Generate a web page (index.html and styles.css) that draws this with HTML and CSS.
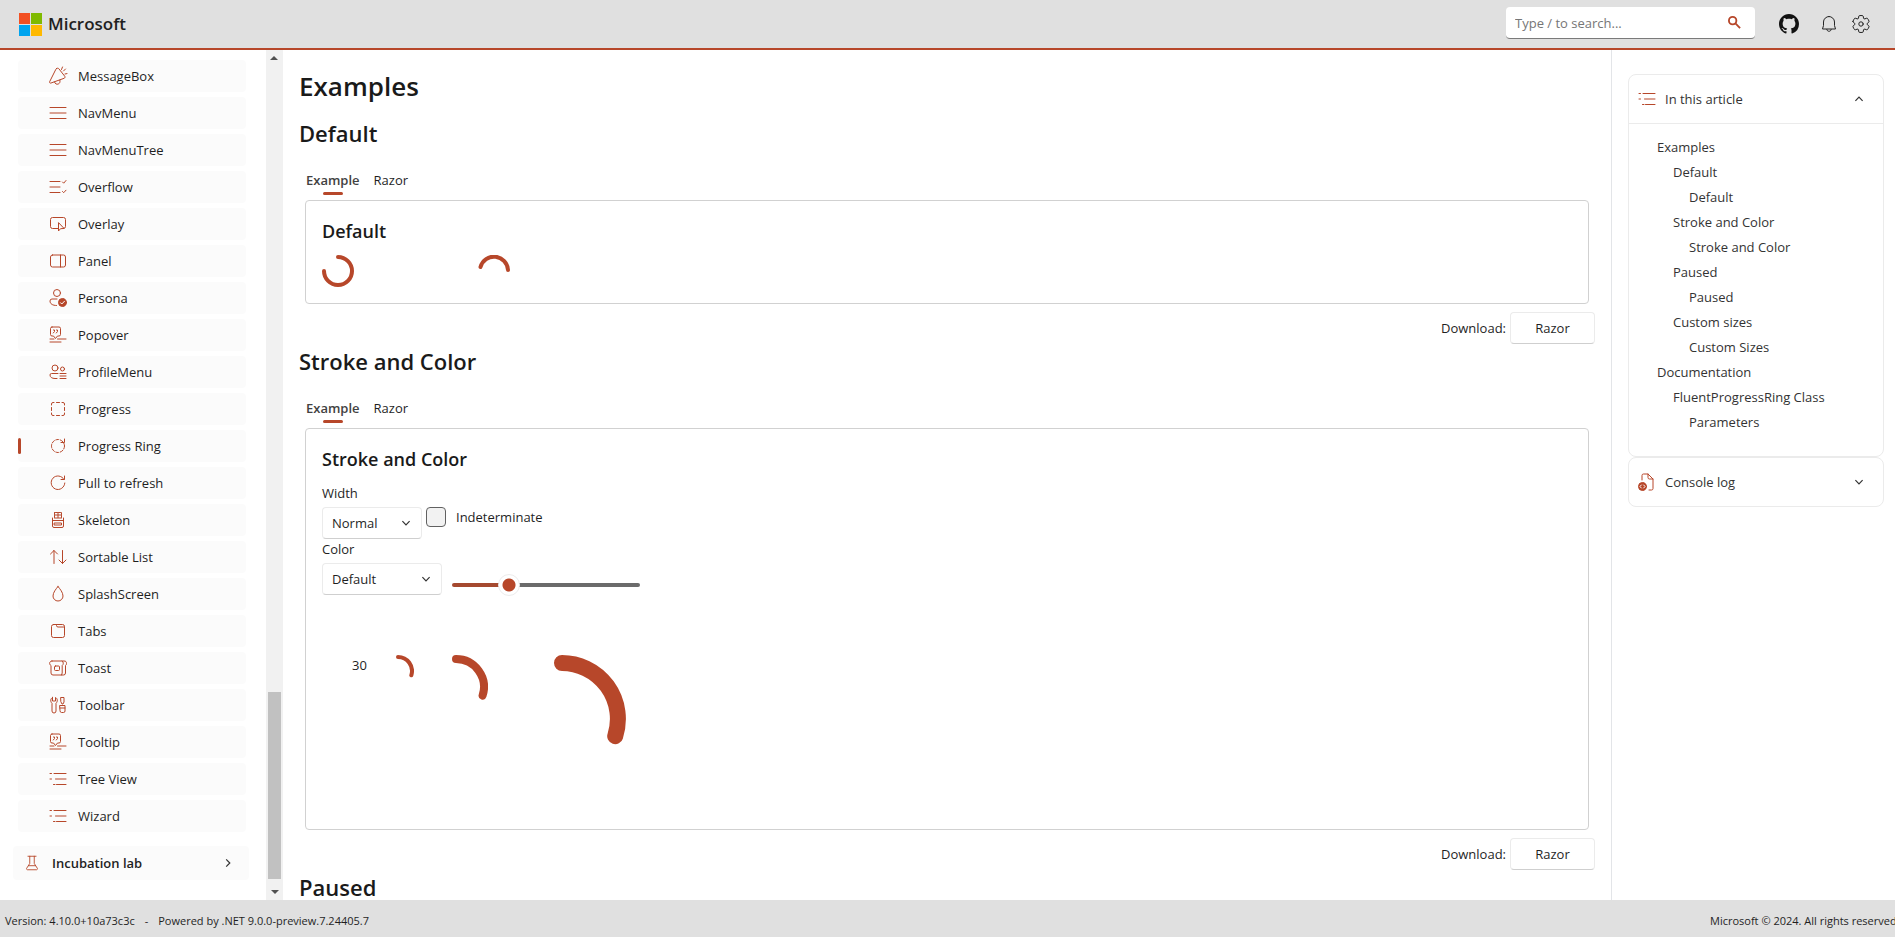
FILE: index.html
```html
<!DOCTYPE html>
<html lang="en">
<head>
<meta charset="utf-8">
<title>Progress Ring</title>
<link rel="stylesheet" href="styles.css">
</head>
<body>
<svg class="sprite" aria-hidden="true">
  <symbol id="i-message" viewBox="0 0 20 20"><path d="M8.500 2.500c.8-.6 1.800-.4 2.400.3l5.800 7.400c.6.8.3 1.800-.6 2.100L3 17c-1 .4-1.700-.4-1.400-1.200L7.600 3.800c.2-.5.5-1 .9-1.300ZM6.500 16c.5 2 2.300 2.600 3.800 2 1.500-.7 2-2 1.600-3.800M13.500 3.500 14.500 1M15.500 5l2-2M17 8l2-.4"/></symbol>
  <symbol id="i-menu" viewBox="0 0 20 20"><path d="M2 4.500h16M2 10h16M2 15.500h16"/></symbol>
  <symbol id="i-overflow" viewBox="0 0 20 20"><path d="M2 4.500h10M2 10h10M2 15.500h10M14.500 5l1.200 1.200L18 3.500M14.500 14.500l1.200 1.200 2.300-2.500"/></symbol>
  <symbol id="i-overlay" viewBox="0 0 20 20"><path d="M10 14.500H4.500a2 2 0 0 1-2-2v-7a2 2 0 0 1 2-2h11a2 2 0 0 1 2 2v7a2 2 0 0 1-2 2M10.500 9v8l2-2.300 3.200-.2Z"/></symbol>
  <symbol id="i-panel" viewBox="0 0 20 20"><rect x="2.500" y="4" width="15" height="12" rx="2"/><path d="M12.500 4v12"/></symbol>
  <symbol id="i-persona" viewBox="0 0 20 20"><circle cx="9" cy="5" r="3.500"/><path d="M9 11H4a2 2 0 0 0-2 2c0 2.800 2.500 4.500 6.500 4.500"/><circle cx="14.500" cy="14.500" r="4" fill="currentColor"/><path class="knock" d="m12.500 14.700 1.300 1.300 2.700-2.800"/></symbol>
  <symbol id="i-popover" viewBox="0 0 20 20"><path d="M4 2h7a1.500 1.500 0 0 1 1.500 1.500v6A1.500 1.500 0 0 1 11 11H9.500l-2 2.500-2-2.500H4a1.500 1.500 0 0 1-1.500-1.500v-6A1.500 1.500 0 0 1 4 2ZM5.500 5h1v1.500L5.300 8M8.500 5h1v1.500L8.300 8M2 14h4M9.500 14H18M2 17h11"/></symbol>
  <symbol id="i-profile" viewBox="0 0 20 20"><circle cx="7" cy="6" r="3"/><circle cx="14.500" cy="7" r="2"/><path d="M10 11.500H3.500a1.500 1.500 0 0 0-1.500 1.500c0 2.200 2 3.500 5 3.500h2M12 11.500h6M12 14h6M12 16.500h6"/></symbol>
  <symbol id="i-progress" viewBox="0 0 20 20"><path d="M3.500 6V5A1.500 1.500 0 0 1 5 3.500h1M8.500 3.500h3M14 3.500h1A1.500 1.500 0 0 1 16.500 5v1M16.500 8.500v3M16.500 14v1a1.500 1.500 0 0 1-1.500 1.500h-1M11.500 16.500h-3M6 16.500H5A1.500 1.500 0 0 1 3.500 15v-1M3.500 11.500v-3"/></symbol>
  <symbol id="i-ring" viewBox="0 0 20 20"><circle cx="10" cy="10" r="6.500" stroke-dasharray="3 1.600"/><path d="M16.500 3v3.500H13"/></symbol>
  <symbol id="i-refresh" viewBox="0 0 20 20"><path d="M16 6.500A6.800 6.800 0 1 0 16.800 10M16.500 3v3.500H13"/></symbol>
  <symbol id="i-skeleton" viewBox="0 0 20 20"><path d="M6.500 7.500V2.500h7v5" stroke-dasharray="2 1"/><path d="M6.500 5h7M6.500 8h7M10 2.500v5M4.500 8v8a1.500 1.500 0 0 0 1.500 1.500h8a1.500 1.500 0 0 0 1.500-1.500V8M4.500 10.500h11M6.500 13h7v2h-7Z"/></symbol>
  <symbol id="i-sort" viewBox="0 0 20 20"><path d="M6 16.500v-13M2.500 7 6 3.500 9.500 7M14.500 3.500v13M11 13l3.500 3.500L18 13"/></symbol>
  <symbol id="i-drop" viewBox="0 0 20 20"><path d="M10 2.500c2 2.500 5 6 5 9.500a5 5 0 0 1-10 0c0-3.500 3-7 5-9.500Z"/></symbol>
  <symbol id="i-tabs" viewBox="0 0 20 20"><rect x="3.500" y="3.500" width="13" height="13" rx="2"/><path d="M8.500 3.500v1a1.500 1.500 0 0 0 1.500 1.500h6.500"/></symbol>
  <symbol id="i-toast" viewBox="0 0 20 20"><path d="M4 3h12c2 0 2.500 1 2.500 2.500 0 1-.4 1.700-1 2V15a2 2 0 0 1-2 2H5a2 2 0 0 1-2-2V7.500C1 6.500 1 3 4 3ZM13.500 17l.7-2V7.500c1.500-1 1.500-3.500 0-4.500"/><rect x="6.500" y="8" width="5" height="4.500" rx="1"/></symbol>
  <symbol id="i-tools" viewBox="0 0 20 20"><path d="M4.500 2.500v3.500h3V2.500c2 .8 2.500 4 .5 5.800v7.700a2 2 0 0 1-4 0V8.300c-2-1.800-1.500-5 .5-5.800ZM13 2.500h3V7l-1 2h-1l-1-2ZM12 10.500h5V16a1.500 1.500 0 0 1-1.500 1.500h-2A1.500 1.500 0 0 1 12 16ZM12 13h5"/></symbol>
  <symbol id="i-list" viewBox="0 0 20 20"><path d="M6 4.500h12M7.500 10H18M8.500 15.500H18M2 4.500h1.500M2 10h1.500M5.500 15.500H7"/></symbol>
  <symbol id="i-lab" viewBox="0 0 20 20"><path d="M5.500 2.500h9M7.500 2.500v8L4 16c-.3.800.2 1.500 1 1.500h10c.8 0 1.300-.7 1-1.500l-3.500-5.500v-8M6 13h8"/></symbol>
  <symbol id="i-down" viewBox="0 0 20 20"><path d="m4 7 6 6 6-6"/></symbol>
  <symbol id="i-bell" viewBox="0 0 20 20"><path d="M10 2.500a5.500 5.500 0 0 0-5.500 5.500v3.500L3.500 15h13l-1-3.500V8A5.500 5.500 0 0 0 10 2.500ZM7.800 15.500c.2 2.500 4.200 2.500 4.400 0"/></symbol>
  <symbol id="i-gear" viewBox="0 0 20 20"><path d="M1.910 7.380A8.500 8.500 0 0 1 3.700 4.300a.5.5 0 0 1 .54-.13l1.920.68a1 1 0 0 0 1.320-.76l.36-2a.5.5 0 0 1 .4-.4 8.530 8.530 0 0 1 3.550 0c.2.040.35.2.38.4l.37 2a1 1 0 0 0 1.320.76l1.920-.68a.5.5 0 0 1 .54.13 8.500 8.500 0 0 1 1.780 3.080c.06.2 0 .4-.15.54l-1.560 1.320a1 1 0 0 0 0 1.520l1.560 1.320a.5.5 0 0 1 .15.54 8.500 8.500 0 0 1-1.780 3.080.5.5 0 0 1-.54.13l-1.920-.68a1 1 0 0 0-1.320.76l-.37 2a.5.5 0 0 1-.38.4 8.530 8.530 0 0 1-3.560 0 .5.5 0 0 1-.39-.4l-.36-2a1 1 0 0 0-1.320-.76l-1.920.68a.5.5 0 0 1-.54-.13 8.500 8.500 0 0 1-1.780-3.080.5.5 0 0 1 .15-.54l1.560-1.320a1 1 0 0 0 0-1.520L2.060 7.920a.5.5 0 0 1-.15-.54Z"/><circle cx="10" cy="10" r="2.200"/></symbol>
  <symbol id="i-console" viewBox="0 0 20 20"><path d="M5 8V3.500A1.500 1.500 0 0 1 6.500 2H11l5 5v9.500a1.500 1.500 0 0 1-1.500 1.500H12M11 2v3.500A1.500 1.500 0 0 0 12.500 7H16"/><circle cx="5.500" cy="14.500" r="4" fill="currentColor"/><path class="knock" d="m4.300 13-1.300 1.500 1.300 1.500M6.700 13 8 14.500 6.700 16"/></symbol>
</svg>

<div class="page">
  <header class="topbar">
    <a class="brand" href="#">
      <svg width="23" height="23" viewBox="0 0 23 23" aria-hidden="true"><path fill="#f25022" d="M0 0h11v11H0z"/><path fill="#7fba00" d="M12 0h11v11H12z"/><path fill="#00a4ef" d="M0 12h11v11H0z"/><path fill="#ffb900" d="M12 12h11v11H12z"/></svg>
      <span>Microsoft</span>
    </a>
    <div class="search">
      <input type="text" aria-label="Search" placeholder="Type / to search...">
      <svg class="glass" viewBox="0 0 14 14" aria-hidden="true"><circle cx="5" cy="5" r="4"/><path d="m8 8 5 5"/></svg>
    </div>
    <a class="tool github" href="#" aria-label="GitHub"><svg viewBox="0 0 16 16" aria-hidden="true"><path d="M8 0C3.580 0 0 3.580 0 8c0 3.540 2.290 6.530 5.470 7.590.4.070.55-.17.55-.38 0-.19-.01-.82-.01-1.490-2.010.37-2.530-.49-2.690-.94-.09-.23-.48-.94-.82-1.130-.28-.15-.68-.52-.01-.53.63-.01 1.080.58 1.230.82.72 1.210 1.870.87 2.330.66.07-.52.28-.87.51-1.070-1.780-.2-3.640-.89-3.640-3.950 0-.87.31-1.590.82-2.150-.08-.2-.36-1.020.08-2.120 0 0 .67-.21 2.200.82.64-.18 1.320-.27 2-.27s1.360.09 2 .27c1.530-1.040 2.200-.82 2.200-.82.44 1.100.16 1.920.08 2.120.51.56.82 1.270.82 2.150 0 3.070-1.870 3.750-3.650 3.950.29.25.54.73.54 1.480 0 1.070-.01 1.930-.01 2.200 0 .21.15.46.55.38A8.010 8.010 0 0 0 16 8c0-4.420-3.580-8-8-8Z"/></svg></a>
    <button class="tool" aria-label="Notifications"><svg class="icon dark"><use href="#i-bell"/></svg></button>
    <button class="tool" aria-label="Settings"><svg class="icon dark"><use href="#i-gear"/></svg></button>
  </header>

  <div class="body">
    <nav class="nav">
      <div class="nav-list">
        <a class="nav-item" href="#"><svg class="icon"><use href="#i-message"/></svg>MessageBox</a>
        <a class="nav-item" href="#"><svg class="icon"><use href="#i-menu"/></svg>NavMenu</a>
        <a class="nav-item" href="#"><svg class="icon"><use href="#i-menu"/></svg>NavMenuTree</a>
        <a class="nav-item" href="#"><svg class="icon"><use href="#i-overflow"/></svg>Overflow</a>
        <a class="nav-item" href="#"><svg class="icon"><use href="#i-overlay"/></svg>Overlay</a>
        <a class="nav-item" href="#"><svg class="icon"><use href="#i-panel"/></svg>Panel</a>
        <a class="nav-item" href="#"><svg class="icon"><use href="#i-persona"/></svg>Persona</a>
        <a class="nav-item" href="#"><svg class="icon"><use href="#i-popover"/></svg>Popover</a>
        <a class="nav-item" href="#"><svg class="icon"><use href="#i-profile"/></svg>ProfileMenu</a>
        <a class="nav-item" href="#"><svg class="icon"><use href="#i-progress"/></svg>Progress</a>
        <a class="nav-item current" href="#"><svg class="icon"><use href="#i-ring"/></svg>Progress Ring</a>
        <a class="nav-item" href="#"><svg class="icon"><use href="#i-refresh"/></svg>Pull to refresh</a>
        <a class="nav-item" href="#"><svg class="icon"><use href="#i-skeleton"/></svg>Skeleton</a>
        <a class="nav-item" href="#"><svg class="icon"><use href="#i-sort"/></svg>Sortable List</a>
        <a class="nav-item" href="#"><svg class="icon"><use href="#i-drop"/></svg>SplashScreen</a>
        <a class="nav-item" href="#"><svg class="icon"><use href="#i-tabs"/></svg>Tabs</a>
        <a class="nav-item" href="#"><svg class="icon"><use href="#i-toast"/></svg>Toast</a>
        <a class="nav-item" href="#"><svg class="icon"><use href="#i-tools"/></svg>Toolbar</a>
        <a class="nav-item" href="#"><svg class="icon"><use href="#i-popover"/></svg>Tooltip</a>
        <a class="nav-item" href="#"><svg class="icon"><use href="#i-list"/></svg>Tree View</a>
        <a class="nav-item" href="#"><svg class="icon"><use href="#i-list"/></svg>Wizard</a>
        <button class="nav-group"><svg class="icon small"><use href="#i-lab"/></svg><span>Incubation lab</span><svg class="chevron right"><use href="#i-down"/></svg></button>
      </div>
      <div class="scrollbar" aria-hidden="true">
        <span class="arrow up"></span>
        <span class="track"><span class="thumb"></span></span>
        <span class="arrow"></span>
      </div>
    </nav>

    <main class="content">
      <h1>Examples</h1>

      <section>
        <h2>Default</h2>
        <div class="tabs" role="tablist"><button class="tab active" role="tab" aria-selected="true">Example</button><button class="tab" role="tab">Razor</button></div>
        <div class="panel">
          <h3>Default</h3>
          <div class="rings spaced">
            <svg class="ring s" viewBox="0 0 32 32"><path d="M16 2a14 14 0 1 1-14 14"/></svg>
            <svg class="ring s" viewBox="0 0 32 32"><path d="M2.500 12A14 14 0 0 1 30 15"/></svg>
          </div>
        </div>
        <div class="download"><span>Download:</span><button class="button">Razor</button></div>
      </section>

      <section>
        <h2>Stroke and Color</h2>
        <div class="tabs" role="tablist"><button class="tab active" role="tab" aria-selected="true">Example</button><button class="tab" role="tab">Razor</button></div>
        <div class="panel tall">
          <h3>Stroke and Color</h3>
          <div class="fields">
            <div class="row">
              <div class="field">
                <label for="width">Width</label>
                <div class="select narrow"><select id="width"><option>Normal</option></select><svg class="chevron"><use href="#i-down"/></svg></div>
              </div>
              <div class="check"><input type="checkbox" id="ind"><label for="ind">Indeterminate</label></div>
            </div>
            <div class="row">
              <div class="field">
                <label for="color">Color</label>
                <div class="select"><select id="color"><option>Default</option></select><svg class="chevron"><use href="#i-down"/></svg></div>
              </div>
              <input class="slider" type="range" min="0" max="100" value="28" aria-label="Progress">
            </div>
          </div>
          <div class="rings sized">
            <span class="value">30</span>
            <svg class="ring s" viewBox="0 0 32 32"><path d="M16 2a14 14 0 0 1 13.300 18.300"/></svg>
            <svg class="ring m" viewBox="0 0 32 32"><path d="M16 2a14 14 0 0 1 13.300 18.300"/></svg>
            <svg class="ring l" viewBox="0 0 32 32"><path d="M16 2a14 14 0 0 1 13.300 18.300"/></svg>
          </div>
        </div>
        <div class="download"><span>Download:</span><button class="button">Razor</button></div>
      </section>

      <section>
        <h2>Paused</h2>
      </section>
    </main>

    <aside class="side">
      <section class="card">
        <button class="card-head"><svg class="icon"><use href="#i-list"/></svg><span>In this article</span><svg class="chevron flip"><use href="#i-down"/></svg></button>
        <ul class="toc">
          <li><a href="#">Examples</a>
            <ul>
              <li><a href="#">Default</a><ul><li><a href="#">Default</a></li></ul></li>
              <li><a href="#">Stroke and Color</a><ul><li><a href="#">Stroke and Color</a></li></ul></li>
              <li><a href="#">Paused</a><ul><li><a href="#">Paused</a></li></ul></li>
              <li><a href="#">Custom sizes</a><ul><li><a href="#">Custom Sizes</a></li></ul></li>
            </ul>
          </li>
          <li><a href="#">Documentation</a>
            <ul>
              <li><a href="#">FluentProgressRing Class</a><ul><li><a href="#">Parameters</a></li></ul></li>
            </ul>
          </li>
        </ul>
      </section>
      <section class="card">
        <button class="card-head"><svg class="icon"><use href="#i-console"/></svg><span>Console log</span><svg class="chevron"><use href="#i-down"/></svg></button>
      </section>
    </aside>
  </div>

  <footer class="footer">
    <span class="version"><span>Version: 4.10.0+10a73c3c</span><span>-</span><span>Powered by .NET 9.0.0-preview.7.24405.7</span></span>
    <span class="copyright">Microsoft © 2024. All rights reserved.</span>
  </footer>
</div>
</body>
</html>
```

FILE: styles.css
```css
:root {
  --accent: #b7472a;
  --text: #1f1f1f;
  --bar: #e0e0e0;
  --line: #ebebeb;
}

* { box-sizing: border-box; }

body {
  margin: 0;
  color: var(--text);
  background: #fff;
  font: 13px/20px "Open Sans", "Noto Sans", sans-serif;
}

button, input, select { font: inherit; color: inherit; }
button { border: 0; background: none; padding: 0; }
a { color: inherit; text-decoration: none; }
h1, h2, h3 { margin: 0; font-weight: 600; color: #1a1a1a; }

.sprite { display: none; }

.page {
  height: 100vh;
  display: grid;
  grid-template-rows: auto minmax(0, 1fr) auto;
  overflow: hidden;
}

.icon {
  width: 20px;
  height: 20px;
  flex: none;
  color: var(--accent);
  fill: none;
  stroke: currentColor;
  stroke-width: 1;
  stroke-linecap: round;
  stroke-linejoin: round;
}
.icon.small { width: 18px; height: 18px; }
.icon.dark { color: #242424; }
.knock { stroke: #fff; }

.chevron {
  width: 12px;
  height: 12px;
  flex: none;
  fill: none;
  stroke: #333;
  stroke-width: 2;
}
.chevron.right { transform: rotate(-90deg); }
.chevron.flip { transform: rotate(180deg); }

/* Top bar */
.topbar {
  display: flex;
  align-items: center;
  height: 50px;
  padding: 0 24px 0 19px;
  background: var(--bar);
  border-bottom: 2px solid var(--accent);
}
.brand {
  display: flex;
  align-items: center;
  gap: 6px;
  margin-right: auto;
  font-size: 17px;
  line-height: 24px;
  font-weight: 600;
}
.search {
  display: flex;
  align-items: center;
  width: 249px;
  height: 32px;
  margin: 0 24px 2px 0;
  padding: 0 14px 0 9px;
  background: #fff;
  border-radius: 4px;
  border-bottom: 1px solid #7a7a7a;
}
.search input {
  flex: 1;
  min-width: 0;
  padding: 0;
  border: 0;
  outline: 0;
  background: none;
}
.search input::placeholder { color: #767676; }
.glass {
  width: 13px;
  height: 13px;
  fill: none;
  stroke: var(--accent);
  stroke-width: 2;
}
.tool { display: flex; margin-left: 12px; }
.github { margin: 0 8px 0 0; }
.github svg { width: 20px; height: 20px; fill: #111; }

/* Body */
.body {
  display: grid;
  grid-template-columns: 283px minmax(0, 1fr) 284px;
  min-height: 0;
}

.nav { display: flex; min-height: 0; }
.nav-list {
  flex: 1;
  display: flex;
  flex-direction: column;
  gap: 5px;
  padding: 10px 20px 0 18px;
  overflow: hidden;
}
.nav-item {
  display: flex;
  flex: none;
  align-items: center;
  gap: 10px;
  height: 32px;
  padding-left: 30px;
  background: #fbfbfb;
  border-radius: 4px;
  position: relative;
}
.nav-item.current::before {
  content: "";
  position: absolute;
  left: 0;
  top: 8px;
  width: 3px;
  height: 16px;
  border-radius: 2px;
  background: var(--accent);
}
.nav-group {
  display: flex;
  flex: none;
  align-items: center;
  gap: 11px;
  height: 34px;
  margin: 9px -3px 0 -5px;
  padding: 0 15px 0 10px;
  background: #fbfbfb;
  border-radius: 4px;
  font-weight: 600;
}
.nav-group .chevron { margin-left: auto; }

.scrollbar {
  width: 17px;
  display: flex;
  flex-direction: column;
  align-items: center;
  background: #f1f1f1;
}
.arrow {
  width: 17px;
  height: 17px;
  display: grid;
  place-items: center;
}
.arrow::before {
  content: "";
  border: 4px solid transparent;
  border-top-color: #505050;
  border-bottom: 0;
}
.arrow.up { transform: rotate(180deg); }
.track {
  flex: 1;
  width: 13px;
  display: flex;
  flex-direction: column;
  justify-content: flex-end;
  padding-bottom: 4px;
}
.thumb { height: 23%; background: #c1c1c1; }

/* Content */
.content {
  padding: 18px 16px 0;
  overflow: hidden;
}
h1 { font-size: 26px; line-height: 36px; margin-bottom: 13px; }
h2 { font-size: 22px; line-height: 32px; }
h3 { font-size: 18px; line-height: 28px; }

.tabs {
  display: flex;
  gap: 14px;
  height: 51px;
  padding: 17px 0 5px 7px;
}
.tab {
  display: flex;
  flex-direction: column;
  align-items: center;
  justify-content: space-between;
  padding-top: 4px;
}
.tab.active { font-weight: 600; color: #424242; }
.tab.active::after {
  content: "";
  width: 20px;
  height: 3px;
  border-radius: 2px;
  background: var(--accent);
}
.panel {
  margin: 0 6px;
  padding: 16px;
  border: 1px solid #d1d1d1;
  border-radius: 4px;
}
.panel.tall { padding-bottom: 46px; }

.ring { flex: none; fill: none; stroke: var(--accent); stroke-width: 4; stroke-linecap: round; }
.ring.s { width: 32px; height: 32px; }
.ring.m { width: 64px; height: 64px; }
.ring.l { width: 128px; height: 128px; }
.rings { display: flex; align-items: flex-start; }
.rings.spaced { gap: 124px; margin-top: 10px; }
.rings.sized { gap: 10px; margin-top: 60px; padding-left: 30px; }
.value { width: 20px; }

.download {
  display: flex;
  align-items: center;
  justify-content: flex-end;
  gap: 4px;
  margin: 8px 0 1px;
}
.button {
  width: 85px;
  height: 32px;
  border: 1px solid var(--line);
  border-bottom-color: #cfcfcf;
  border-radius: 4px;
}

.fields { margin-top: 10px; }
.row { display: flex; height: 56px; }
.field label { display: block; margin-bottom: 4px; }
.select {
  display: flex;
  align-items: center;
  width: 120px;
  height: 32px;
  padding: 0 9px;
  border: 1px solid var(--line);
  border-bottom-color: #cfcfcf;
  border-radius: 4px;
}
.select.narrow { width: 100px; }
.select select {
  flex: 1;
  min-width: 0;
  appearance: none;
  padding: 0;
  border: 0;
  outline: 0;
  background: none;
}
.check {
  display: flex;
  align-items: center;
  gap: 10px;
  height: 20px;
  margin: 24px 0 0 4px;
}
.check input {
  appearance: none;
  width: 20px;
  height: 20px;
  margin: 0;
  border: 1px solid #616161;
  border-radius: 4px;
  background: #f2f2f2;
}
.slider {
  appearance: none;
  width: 188px;
  height: 22px;
  margin: 35px 0 0 10px;
  background: none;
}
.slider::-webkit-slider-runnable-track {
  height: 4px;
  border-radius: 2px;
  background: linear-gradient(to right, #a5492f 30%, #6b6b6b 30%);
}
.slider::-webkit-slider-thumb {
  appearance: none;
  width: 22px;
  height: 22px;
  margin-top: -9px;
  border: 1px solid #ececec;
  border-radius: 50%;
  background: radial-gradient(circle, var(--accent) 6px, #fff 7px);
}

/* Right column */
.side {
  padding: 24px 11px 0 16px;
  border-left: 1px solid #e3e5e8;
}
.card {
  border: 1px solid var(--line);
  border-radius: 8px;
}
.card-head {
  display: flex;
  align-items: center;
  gap: 8px;
  width: 100%;
  height: 48px;
  padding: 0 18px 0 8px;
}
.card-head .chevron { margin-left: auto; }
.toc {
  margin: 0;
  padding: 11px 16px 21px 28px;
  border-top: 1px solid var(--line);
  line-height: 25px;
}
.toc ul { margin: 0; padding-left: 16px; }
.toc li { list-style: none; }
.toc a { display: block; }
.toc, .card-head { color: #333; }

/* Footer */
.footer {
  display: flex;
  align-items: center;
  justify-content: space-between;
  height: 37px;
  padding: 4px 0 0 5px;
  background: var(--bar);
  font-size: 11px;
  white-space: nowrap;
}
.version { display: flex; gap: 10px; }
.copyright { width: 185px; }
```
